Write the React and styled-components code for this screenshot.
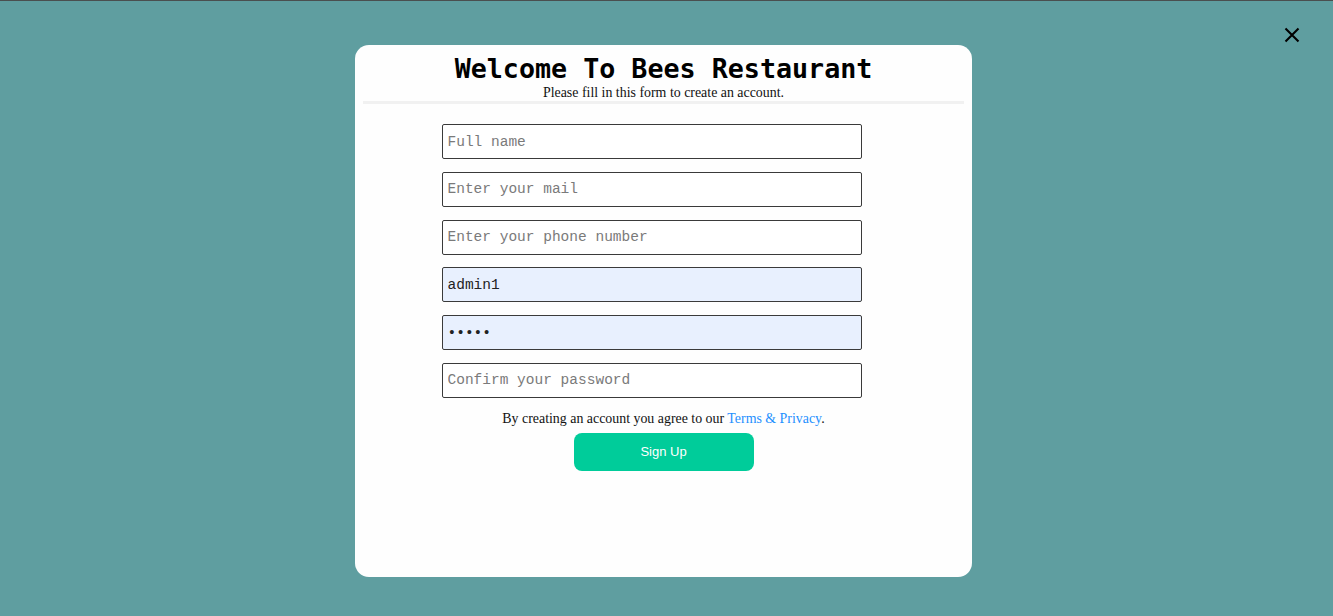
import React from "react";
import styled, { createGlobalStyle } from "styled-components";

const GlobalStyle = createGlobalStyle`
  html, body {
    margin: 0;
    padding: 0;
  }
  body {
    font-family: "Liberation Serif", "Times New Roman", serif;
    background: #5f9ea0;
  }
`;

const Overlay = styled.div`
  box-sizing: border-box;
  width: 100%;
  height: 616px;
  background: #5f9ea0;
  border-top: 1px solid #4a4f4f;
  display: flex;
  justify-content: center;
  align-items: flex-start;
  padding: 44px 6px 0 0;
  position: relative;
`;

const CloseButton = styled.button`
  position: absolute;
  top: 24px;
  right: 31px;
  width: 20px;
  height: 20px;
  padding: 0;
  border: none;
  background: transparent;
  cursor: pointer;
  display: flex;
  align-items: center;
  justify-content: center;
`;

const Modal = styled.div`
  box-sizing: border-box;
  width: 617px;
  height: 532px;
  background: #fefefe;
  border-radius: 14px;
  padding: 8px 8px 0;
  display: flex;
  flex-direction: column;
`;

const Title = styled.h1`
  margin: 0;
  text-align: center;
  font-family: "DejaVu Sans Mono", "Liberation Mono", monospace;
  font-weight: 700;
  font-size: 26.7px;
  line-height: 31px;
  color: #000;
`;

const Subtitle = styled.p`
  margin: 0;
  padding-top: 1px;
  text-align: center;
  font-size: 13.9px;
  line-height: 16px;
  color: #111;
`;

const Divider = styled.hr`
  margin: 0;
  border: none;
  height: 3px;
  background: #f1f1f1;
`;

const Form = styled.form`
  display: flex;
  flex-direction: column;
  align-items: center;
  margin-top: 20px;
`;

const Fields = styled.div`
  display: flex;
  flex-direction: column;
  align-items: center;
  gap: 12.75px;
  padding-right: 24px;
`;

const Field = styled.input`
  box-sizing: border-box;
  width: 420px;
  height: 35px;
  margin: 0;
  padding: 0 5px;
  border: 1px solid #3a3a3a;
  border-radius: 2px;
  background: ${({ $filled }) => ($filled ? "#e8f0fe" : "#fff")};
  font-family: "Liberation Mono", "DejaVu Sans Mono", monospace;
  font-size: 14.5px;
  color: #222;
  outline: none;

  &::placeholder {
    color: #7a7a7a;
  }
`;

const Terms = styled.p`
  margin: 13px 0 0;
  font-size: 13.9px;
  line-height: 16px;
  color: #111;
  text-align: center;

  a {
    color: #1e90ff;
    text-decoration: none;
  }
`;

const SignUpButton = styled.button`
  margin-top: 6px;
  width: 180px;
  height: 38px;
  border: none;
  border-radius: 8px;
  background: #00cc9a;
  color: #fff;
  font-family: "Liberation Sans", Arial, sans-serif;
  font-size: 13px;
  cursor: pointer;
`;

const fields = [
  { placeholder: "Full name", type: "text" },
  { placeholder: "Enter your mail", type: "email" },
  { placeholder: "Enter your phone number", type: "tel" },
  { placeholder: "Username", type: "text", value: "admin1" },
  { placeholder: "Password", type: "password", value: "admin" },
  { placeholder: "Confirm your password", type: "password" },
];

export default function App() {
  return (
    <>
      <GlobalStyle />
      <Overlay>
        <CloseButton aria-label="Close">
          <svg width="16" height="16" viewBox="0 0 16 16">
            <path
              d="M1.5 1.5 L14.5 14.5 M14.5 1.5 L1.5 14.5"
              stroke="#000"
              strokeWidth="2.1"
            />
          </svg>
        </CloseButton>
        <Modal>
          <Title>Welcome To Bees Restaurant</Title>
          <Subtitle>Please fill in this form to create an account.</Subtitle>
          <Divider />
          <Form onSubmit={(e) => e.preventDefault()}>
            <Fields>
              {fields.map((f) => (
                <Field
                  key={f.placeholder}
                  type={f.type}
                  placeholder={f.placeholder}
                  defaultValue={f.value}
                  $filled={!!f.value}
                />
              ))}
            </Fields>
            <Terms>
              By creating an account you agree to our{" "}
              <a href="#terms">Terms &amp; Privacy</a>.
            </Terms>
            <SignUpButton type="submit">Sign Up</SignUpButton>
          </Form>
        </Modal>
      </Overlay>
    </>
  );
}
